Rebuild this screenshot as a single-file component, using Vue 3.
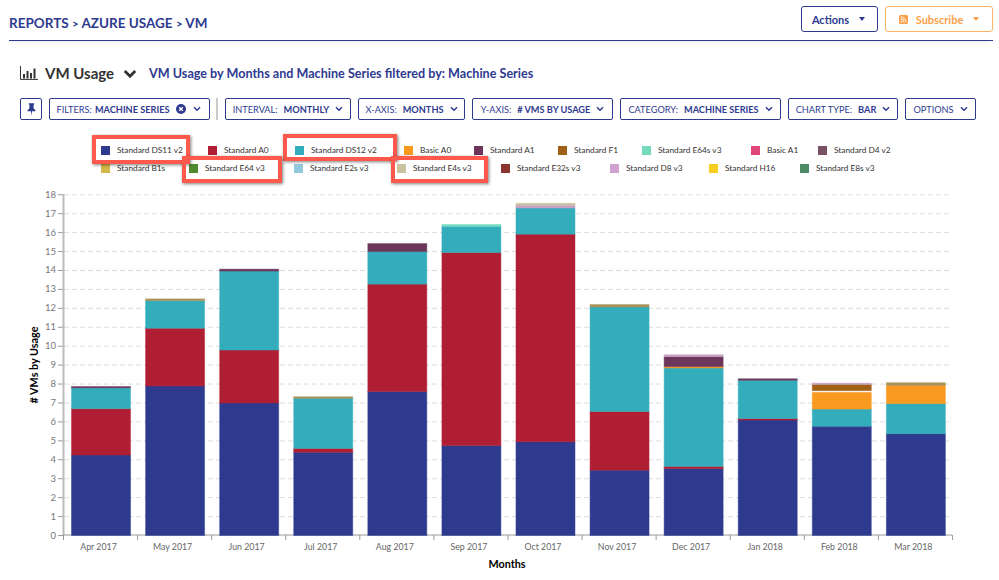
<template>
  <div class="page">
    <header class="topbar">
      <div class="crumbs">REPORTS <span class="sep">&gt;</span> AZURE USAGE <span class="sep">&gt;</span> VM</div>
      <div class="top-actions">
        <button class="btn-actions">Actions <span class="caret"></span></button>
        <button class="btn-subscribe">
          <svg class="rss" viewBox="0 0 12 12">
            <rect width="12" height="12" rx="2" fill="#fa9f47" />
            <circle cx="3.3" cy="8.8" r="1.2" fill="#fff" />
            <path d="M2.2 5.2a4.6 4.6 0 0 1 4.6 4.6M2.2 2.6a7.2 7.2 0 0 1 7.2 7.2" fill="none" stroke="#fff" stroke-width="1.3" />
          </svg>
          Subscribe <span class="caret"></span>
        </button>
      </div>
    </header>

    <div class="title-row">
      <svg class="bars-icon" viewBox="0 0 18 14">
        <path d="M.5 0v13.4H18" fill="none" stroke="#333" />
        <path d="M3 8h2v4.500H3zM6.500 5h2v7.500h-2zM10 7h2v5.500h-2zM13.500 2.500h2v10h-2z" fill="#333" />
      </svg>
      <h1>VM Usage</h1>
      <svg class="title-chev" viewBox="0 0 14 10"><path d="M1.800 2 7 7.200 12.200 2" fill="none" stroke="#333" stroke-width="2.800" /></svg>
      <h2>VM Usage by Months and Machine Series filtered by: Machine Series</h2>
    </div>

    <div class="toolbar">
      <button class="tool pin">
        <svg viewBox="0 0 10 14" width="9" height="13">
          <path d="M2 0h6v1.200L7.300 2v3.500L9.500 8v1H5.600L5 14l-.6-5H.5V8l2.200-2.500V2L2 1.200z" fill="#2e3a8f" />
        </svg>
      </button>
      <button class="tool filters">
        <span class="label">FILTERS:</span><b>MACHINE SERIES</b>
        <svg class="clear" viewBox="0 0 10 10">
          <circle cx="5" cy="5" r="5" fill="#2e3a8f" />
          <path d="M3.200 3.200l3.600 3.600M6.800 3.200 3.200 6.800" stroke="#fff" stroke-width="1.400" />
        </svg>
        <svg class="chev" viewBox="0 0 10 7"><path d="M1.200 1.300 5 5l3.800-3.700" /></svg>
      </button>
      <div class="divider"></div>
      <button v-for="t in tools" :key="t.label" class="tool" :style="{ width: t.width + 'px' }">
        <span class="label">{{ t.label }}</span><b v-if="t.value">{{ t.value }}</b>
        <svg class="chev" viewBox="0 0 10 7"><path d="M1.200 1.300 5 5l3.800-3.700" /></svg>
      </button>
    </div>

    <div class="legend">
      <div v-for="(row, i) in legend" :key="i" class="legend-row">
        <div v-for="item in row" :key="item.name" class="legend-item" :style="{ width: item.w + 'px' }">
          <i :style="{ background: item.color }"></i>{{ item.name }}
        </div>
      </div>
      <div class="mark m1"></div>
      <div class="mark m3"></div>
      <div class="mark m2"></div>
      <div class="mark m4"></div>
    </div>

    <svg class="chart" viewBox="0 185 999 395" width="999" height="395">
      <g v-for="n in 19" :key="n">
        <line v-if="n > 1" x1="64" :x2="952" :y1="yPos(n - 1)" :y2="yPos(n - 1)" class="grid" />
        <line x1="58" x2="63" :y1="yPos(n - 1)" :y2="yPos(n - 1)" class="axis" />
        <text x="56" :y="yPos(n - 1) + 3" class="tick" text-anchor="end">{{ n - 1 }}</text>
      </g>
      <line x1="63.500" x2="63.500" y1="194" y2="535" class="axis-y" />
      <line x1="63" x2="952" y1="535" y2="535" class="axis" />

      <g v-for="(bar, i) in bars" :key="bar.month">
        <rect
          v-for="(s, j) in segments(bar.stack)"
          :key="j"
          :x="barX(i)"
          :y="s.y"
          width="59"
          :height="s.h"
          :fill="s.color"
          :stroke="s.color"
          stroke-opacity=".45"
          stroke-width="1"
        />
        <text :x="barX(i) + 27" y="550" class="month" text-anchor="middle">{{ bar.month }}</text>
      </g>
      <line v-for="n in 13" :key="'t' + n" :x1="tickX(n - 1)" :x2="tickX(n - 1)" y1="535" y2="540" class="axis" />

      <text x="507" y="568" class="axis-title" text-anchor="middle">Months</text>
      <text transform="translate(38 365) rotate(-90)" class="axis-title" text-anchor="middle"># VMs by Usage</text>
    </svg>
  </div>
</template>

<script setup>
const colors = {
  blue: '#2d3a8e',
  red: '#b01e33',
  teal: '#33adbc',
  orange: '#fa991f',
  purple: '#6b3659',
  brown: '#a06016',
  mint: '#74dcbd',
  pink: '#c9a2c4',
  tan: '#c9c49f',
  olive: '#a9935a',
}

const tools = [
  { label: 'INTERVAL:', value: 'MONTHLY', width: 126 },
  { label: 'X-AXIS:', value: 'MONTHS', width: 107 },
  { label: 'Y-AXIS:', value: '# VMS BY USAGE', width: 141 },
  { label: 'CATEGORY:', value: 'MACHINE SERIES', width: 161 },
  { label: 'CHART TYPE:', value: 'BAR', width: 110 },
  { label: 'OPTIONS', value: '', width: 71 },
]

const legend = [
  [
    { name: 'Standard DS11 v2', color: '#2d3a8e', w: 107 },
    { name: 'Standard A0', color: '#b01e33', w: 87 },
    { name: 'Standard DS12 v2', color: '#33adbc', w: 109 },
    { name: 'Basic A0', color: '#fa991f', w: 70 },
    { name: 'Standard A1', color: '#6b3659', w: 84 },
    { name: 'Standard F1', color: '#a06016', w: 84 },
    { name: 'Standard E64s v3', color: '#74dcbd', w: 109 },
    { name: 'Basic A1', color: '#e0457b', w: 67 },
    { name: 'Standard D4 v2', color: '#7a5065', w: 90 },
  ],
  [
    { name: 'Standard B1s', color: '#d4b84a', w: 88 },
    { name: 'Standard E64 v3', color: '#4f8a2f', w: 105 },
    { name: 'Standard E2s v3', color: '#93c9dc', w: 103 },
    { name: 'Standard E4s v3', color: '#c9c49f', w: 104 },
    { name: 'Standard E32s v3', color: '#8a352f', w: 109 },
    { name: 'Standard D8 v3', color: '#d0a2d0', w: 99 },
    { name: 'Standard H16', color: '#f6ce1f', w: 91 },
    { name: 'Standard E8s v3', color: '#4f8a68', w: 100 },
  ],
]

// each stack lists [top value, colour key] from the bottom up
const bars = [
  { month: 'Apr 2017', stack: [[4.25, 'blue'], [6.7, 'red'], [7.8, 'teal'], [7.87, 'purple']] },
  { month: 'May 2017', stack: [[7.9, 'blue'], [10.95, 'red'], [12.4, 'teal'], [12.5, 'olive']] },
  { month: 'Jun 2017', stack: [[7, 'blue'], [9.8, 'red'], [13.97, 'teal'], [14.07, 'purple']] },
  { month: 'Jul 2017', stack: [[4.4, 'blue'], [4.6, 'red'], [7.25, 'teal'], [7.33, 'olive']] },
  { month: 'Aug 2017', stack: [[7.6, 'blue'], [13.28, 'red'], [15, 'teal'], [15.42, 'purple']] },
  { month: 'Sep 2017', stack: [[4.75, 'blue'], [14.95, 'red'], [16.33, 'teal'], [16.43, 'mint']] },
  { month: 'Oct 2017', stack: [[4.95, 'blue'], [15.92, 'red'], [17.3, 'teal'], [17.45, 'pink'], [17.55, 'tan']] },
  { month: 'Nov 2017', stack: [[3.45, 'blue'], [6.55, 'red'], [12.07, 'teal'], [12.2, 'olive']] },
  { month: 'Dec 2017', stack: [[3.53, 'blue'], [3.65, 'red'], [8.85, 'teal'], [8.92, 'orange'], [9.45, 'purple'], [9.55, 'pink']] },
  { month: 'Jan 2018', stack: [[6.1, 'blue'], [6.18, 'red'], [8.2, 'teal'], [8.28, 'purple']] },
  { month: 'Feb 2018', stack: [[5.77, 'blue'], [6.68, 'teal'], [7.58, 'orange'], [7.65, 'white'], [7.98, 'brown'], [8.05, 'pink']] },
  { month: 'Mar 2018', stack: [[5.38, 'blue'], [6.97, 'teal'], [7.93, 'orange'], [8.07, 'olive']] },
]

const yPos = (v) => 535 - v * 18.93 + 0.5
const tickX = (i) => 63.5 + i * 74.08
const barX = (i) => 71.5 + i * 74.08

function segments(stack) {
  let prev = 0
  return stack.map(([top, key]) => {
    const s = { y: yPos(top), h: (top - prev) * 18.93, color: colors[key] || '#ffffff' }
    prev = top
    return s
  })
}
</script>

<style scoped>
.page {
  width: 999px;
  height: 580px;
  overflow: hidden;
  background: #fff;
  font-family: Lato, "Open Sans", sans-serif;
}
.topbar {
  height: 40px;
  margin: 0 6px 0 9px;
  display: flex;
  justify-content: space-between;
  border-bottom: 1px solid #2e3a8f;
  box-shadow: 0 3px 5px -3px rgba(0, 0, 0, .12);
}
.crumbs {
  margin-top: 15px;
  font-size: 13.500px;
  line-height: 16px;
  font-weight: 700;
  color: #2e3a8f;
}
.sep {
  font-size: 11.500px;
}
.top-actions {
  display: flex;
  gap: 7px;
  margin-top: 6px;
  height: 26px;
}
button {
  font-family: inherit;
  background: #fff;
  cursor: pointer;
  padding: 0;
}
.btn-actions,
.btn-subscribe {
  height: 26px;
  border-radius: 3px;
  font-size: 11px;
  font-weight: 700;
  display: flex;
  align-items: center;
  justify-content: center;
}
.btn-actions {
  width: 77px;
  border: 1px solid #2e3a8f;
  color: #2e3a8f;
  gap: 8px;
  padding-right: 2px;
}
.btn-subscribe {
  width: 108px;
  border: 1px solid #fbb46a;
  color: #fa9f47;
  gap: 8px;
}
.rss {
  width: 9px;
  height: 9px;
}
.caret {
  display: inline-block;
  border: 3.500px solid transparent;
  border-top: 4px solid currentColor;
  border-bottom: 0;
  margin-left: 2px;
}
.title-row {
  display: flex;
  align-items: center;
  height: 22px;
  margin: 21px 0 0 20px;
}
.bars-icon {
  width: 18px;
  height: 14px;
  margin-right: 7px;
}
h1 {
  margin: 0;
  font-size: 15px;
  font-weight: 700;
  color: #333;
}
.title-chev {
  width: 14px;
  height: 10px;
  margin: 2px 12px 0 9px;
}
h2 {
  margin: 0;
  font-size: 12.600px;
  font-weight: 700;
  color: #2e3a8f;
}
.toolbar {
  display: flex;
  align-items: center;
  gap: 7px;
  margin: 14px 0 0 20px;
  height: 22px;
}
.tool {
  height: 22px;
  box-sizing: border-box;
  border: 1px solid #2e3a8f;
  border-radius: 2px;
  color: #2e3a8f;
  font-size: 9.200px;
  display: flex;
  align-items: center;
  justify-content: center;
  gap: 6px;
  white-space: nowrap;
}
.tool b {
  font-weight: 700;
}
.pin {
  width: 22px;
}
.filters {
  width: 161px;
  gap: 3px;
  padding-right: 2px;
}
.divider {
  width: 2px;
  height: 22px;
  margin: 0 0 0 -1px;
  background: #ccc;
}
.clear {
  width: 10px;
  height: 10px;
  margin: 0 4px 0 3px;
}
.chev {
  width: 8px;
  height: 6px;
  flex: none;
}
.chev path {
  fill: none;
  stroke: #2e3a8f;
  stroke-width: 1.800;
}
.legend {
  position: relative;
  height: 65px;
  box-sizing: border-box;
  padding: 21px 0 0 101px;
}
.legend-row {
  display: flex;
  height: 18px;
  align-items: center;
}
.legend-item {
  display: flex;
  align-items: center;
  flex: none;
  font-size: 8.300px;
  color: #333;
  white-space: nowrap;
}
.legend-item i {
  width: 9px;
  height: 9px;
  margin-right: 7px;
  box-shadow: 0 0 0 1px rgba(255, 255, 255, .3);
}
.mark {
  position: absolute;
  box-sizing: border-box;
  border: 4px solid #fd5a4d;
  box-shadow: 1px 1px 3px rgba(0, 0, 0, .5);
}
.m1 {
  left: 92px;
  top: 15px;
  width: 98px;
  height: 29px;
}
.m2 {
  left: 182px;
  top: 36px;
  width: 100px;
  height: 27px;
}
.m3 {
  left: 283px;
  top: 14px;
  width: 114px;
  height: 27px;
}
.m4 {
  left: 391px;
  top: 36px;
  width: 97px;
  height: 27px;
}
.chart {
  display: block;
}
.grid {
  stroke: #ddd;
  stroke-dasharray: 5 3;
}
.axis {
  stroke: #999;
}
.axis-y {
  stroke: #bbb;
  stroke-width: 2;
}
.tick {
  font-size: 9.500px;
  fill: #777;
}
.month {
  font-size: 8.800px;
  fill: #666;
}
.axis-title {
  font-size: 10.800px;
  font-weight: 700;
  fill: #000;
}
</style>
